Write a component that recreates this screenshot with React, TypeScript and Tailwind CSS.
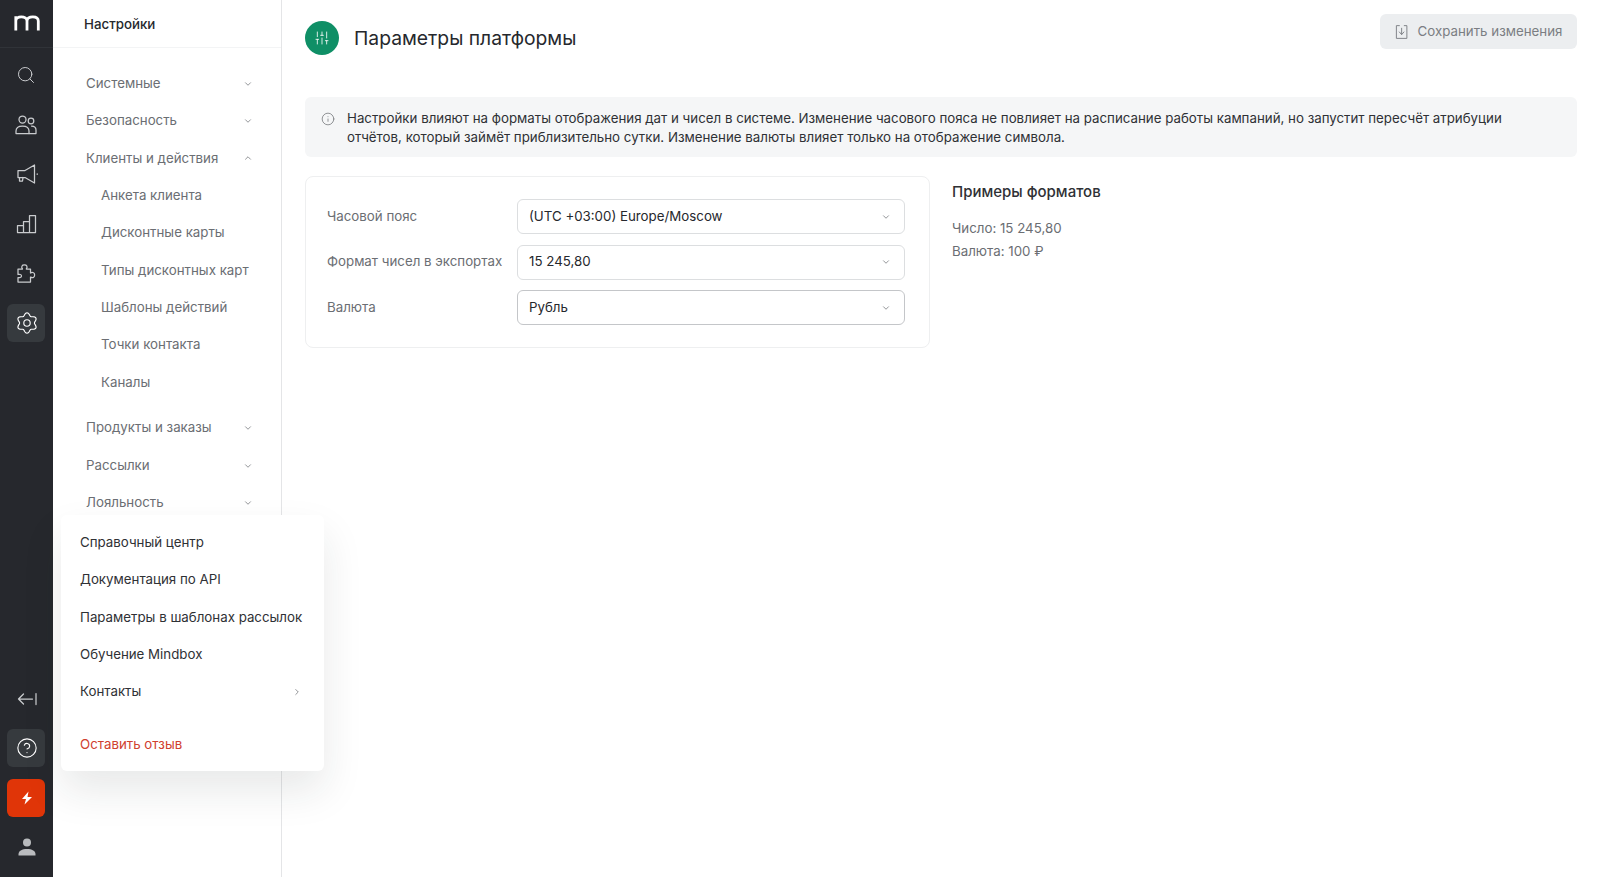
import React from "react";
import { ChevronDown, ChevronUp, ChevronRight, CircleHelp, Info, Search, SlidersVertical } from "lucide-react";

const Ico = ({ children, s = 24 }: { children: React.ReactNode; s?: number }) => (
  <svg width={s} height={s} viewBox="0 0 24 24" fill="none" stroke="currentColor" strokeWidth={1.25} strokeLinecap="round" strokeLinejoin="round">
    {children}
  </svg>
);

const gearPath = (() => {
  let d = "";
  for (let i = 0; i < 96; i++) {
    const t = (i / 96) * Math.PI * 2;
    const r = 9.6 + 1.5 * Math.cos(6 * t);
    const x = 12 + r * Math.sin(t);
    const y = 12 - r * Math.cos(t);
    d += `${i === 0 ? "M" : "L"}${x.toFixed(2)} ${y.toFixed(2)}`;
  }
  return d + "z";
})();

const Row = ({ label, open, sub }: { label: string; open?: boolean; sub?: boolean }) => (
  <div className={`h-[37.4px] flex items-center justify-between pr-[28px] text-[13.3px] text-[#6b6e73] ${sub ? "pl-[48px] whitespace-nowrap" : "pl-[33px]"}`}>
    <span>{label}</span>
    {!sub && (open ? <ChevronUp size={10} strokeWidth={1.75} /> : <ChevronDown size={10} strokeWidth={1.75} />)}
  </div>
);

const Field = ({ label, value, strong }: { label: string; value: string; strong?: boolean }) => (
  <div className="flex items-center">
    <div className="w-[190px] shrink-0 text-[13.3px] whitespace-nowrap text-[#6b6e73]">{label}</div>
    <div className={`flex-1 h-[35px] border rounded-[6px] flex items-center justify-between pl-[11px] pr-[13px] text-[13.3px] text-[#26282d] ${strong ? "border-[#c4c6c9]" : "border-[#dcdee0]"}`}>
      <span>{value}</span>
      <ChevronDown size={10} strokeWidth={1.75} className="text-[#6b6e73]" />
    </div>
  </div>
);

const MenuItem = ({ children, red }: { children: React.ReactNode; red?: boolean }) => (
  <div className={`h-[37.4px] flex items-center justify-between whitespace-nowrap text-[13.3px] ${red ? "text-[#d0402f]" : "text-[#2f3135]"}`}>{children}</div>
);

const SideBtn = ({ children, active, className = "" }: { children: React.ReactNode; active?: boolean; className?: string }) => (
  <div className={`w-[38px] h-[38px] rounded-[6px] flex items-center justify-center ${active ? "bg-[#363a3e]" : ""} ${className}`}>{children}</div>
);

export default function App() {
  return (
    <div className="relative flex h-[877px] w-[1599px] overflow-hidden bg-white font-['Inter',sans-serif]">
      <aside className="w-[53px] shrink-0 bg-[#26282d] flex flex-col items-center text-[#c9cbce]">
        <div className="h-[48px] w-full border-b border-[#303338] flex items-center justify-center text-white pb-[1px]">
          <svg width="26" height="16" viewBox="0 0 26 16" fill="none" stroke="currentColor" strokeWidth="2.8">
            <path d="M1.800 15.500V1.300M1.800 6C1.800 3.300 4.300 1.800 7.300 1.800s5.700 1.500 5.700 4.200v9.500M13 6c0-2.700 2.200-4.200 5.800-4.200s5.500 1.500 5.500 4.200v9.500" />
          </svg>
        </div>
        <div className="flex flex-col items-center gap-[11.5px] pt-[8px] pr-[1px]">
          <SideBtn><Search size={20} strokeWidth={1.2} /></SideBtn>
          <SideBtn>
            <Ico>
              <circle cx="8.500" cy="6.500" r="3.500" />
              <circle cx="17" cy="8" r="2.800" />
              <path d="M2 20.500v-2.500c0-3 2.500-5 6.500-5s6.500 2 6.500 5v2.500z" />
              <path d="M17.500 13c2.800 0 4.500 1.700 4.500 4v3.500h-7" />
            </Ico>
          </SideBtn>
          <SideBtn>
            <Ico>
              <path d="M4 8.500h7L20.500 3v18L11 15.500H4z" />
              <path d="M5.500 15.500v3.500h3l.5-3.500M23 12h.5" />
            </Ico>
          </SideBtn>
          <SideBtn>
            <Ico>
              <path d="M3.500 20.500v-7h6v7zM9.500 20.500V9.500h6v11zM15.500 20.500V3.500h6v17zM3.500 20.500h18" />
            </Ico>
          </SideBtn>
          <SideBtn>
            <Ico>
              <path d="M4 8h4.500c-.8-1-1-2-.5-3 .7-1.500 4-1.500 4.800 0 .5 1 .3 2-.5 3h4.200v4c1-.7 2-.8 3-.3 1.500.7 1.500 4 0 4.700-1 .5-2 .3-3-.3v4.900H4v-4.500c1.500.5 3.500 0 3.500-1.500s-2-2-3.500-1.500z" />
            </Ico>
          </SideBtn>
          <SideBtn active>
            <span className="text-white pl-[1px]">
              <Ico s={22}>
                <path d={gearPath} />
                <circle cx="12" cy="12" r="3.500" />
              </Ico>
            </span>
          </SideBtn>
        </div>
        <div className="mt-auto flex flex-col items-center gap-[11.5px] pb-[11px] pr-[1px]">
          <SideBtn>
            <span className="pl-[1px]">
              <Ico>
                <path d="M21 6.500v11M17.500 12H3.500M8.500 7l-5 5 5 5" />
              </Ico>
            </span>
          </SideBtn>
          <SideBtn active><CircleHelp size={22} strokeWidth={1.2} className="text-white ml-[1px]" /></SideBtn>
          <SideBtn className="bg-[#e03508]">
            <svg className="ml-[1px]" width="14" height="14" viewBox="0 0 14 14" fill="white"><path d="M8.500 0.500 2 8h4l-1.500 5.500L12 6H7.500z" /></svg>
          </SideBtn>
          <SideBtn>
            <svg className="ml-[1px]" width="20" height="20" viewBox="0 0 20 20" fill="#b9bbbe"><circle cx="10" cy="5.500" r="4" /><path d="M1.500 18.500v-1.500c0-3 3.500-5 8.500-5s8.500 2 8.500 5v1.500z" /></svg>
          </SideBtn>
        </div>
      </aside>

      <nav className="w-[229px] shrink-0 border-r border-[#e4e5e7] flex flex-col">
        <div className="h-[48px] border-b border-[#f3f4f5] flex items-center pl-[31px] pt-[2px] text-[13.3px] font-medium text-[#26282d]">Настройки</div>
        <div className="pt-[17px]">
          <Row label="Системные" />
          <Row label="Безопасность" />
          <Row label="Клиенты и действия" open />
          <Row sub label="Анкета клиента" />
          <Row sub label="Дисконтные карты" />
          <Row sub label="Типы дисконтных карт" />
          <Row sub label="Шаблоны действий" />
          <Row sub label="Точки контакта" />
          <Row sub label="Каналы" />
          <div className="h-[8px]" />
          <Row label="Продукты и заказы" />
          <Row label="Рассылки" />
          <Row label="Лояльность" />
        </div>
      </nav>

      <main className="flex-1 min-w-0 pl-[23px] pr-[22px]">
        <header className="h-[97px] flex justify-between">
          <div className="flex items-center gap-[15px] h-[76px]">
            <div className="w-[34px] h-[34px] rounded-full bg-[#0f8f66] flex items-center justify-center text-white">
              <SlidersVertical size={16} strokeWidth={1.25} />
            </div>
            <h1 className="text-[19.3px] font-normal text-[#26282d]">Параметры платформы</h1>
          </div>
          <button className="mt-[14px] h-[35px] w-[197px] rounded-[6px] bg-[#eceef0] flex items-center justify-center gap-[7px] pr-[2px] text-[13.3px] text-[#7b7e83]">
            <Ico s={18}>
              <path d="M8.500 3.500H4.500v17h14v-17h-3.500M11.500 7v8M8.500 12l3 3.500 3-3.500" />
            </Ico>
            Сохранить изменения
          </button>
        </header>

        <div className="h-[60px] rounded-[6px] bg-[#f5f6f7] flex items-center pl-[16px] pr-[60px] pt-[2px] gap-[12px] text-[13.3px] leading-[19.500px] text-[#2f3135]">
          <Info size={14} strokeWidth={1.25} className="shrink-0 self-start mt-[13px] text-[#6b6e73]" />
          <p>Настройки влияют на форматы отображения дат и чисел в системе. Изменение часового пояса не повлияет на расписание работы кампаний, но запустит пересчёт атрибуции отчётов, который займёт приблизительно сутки. Изменение валюты влияет только на отображение символа.</p>
        </div>

        <div className="flex mt-[19px]">
          <section className="w-[625px] h-[172px] border border-[#eeeff0] rounded-[8px] pl-[21px] pr-[24px] pt-[22px] flex flex-col gap-[10.5px]">
            <Field label="Часовой пояс" value="(UTC +03:00) Europe/Moscow" />
            <Field label="Формат чисел в экспортах" value="15 245,80" />
            <Field label="Валюта" value="Рубль" strong />
          </section>
          <section className="ml-[22px] pt-[6px]">
            <h2 className="text-[15px] font-medium leading-[20px] text-[#2f3135]">Примеры форматов</h2>
            <p className="mt-[15px] text-[13.3px] leading-[23px] text-[#6b6e73]">Число: 15 245,80</p>
            <p className="text-[13.3px] leading-[23px] text-[#6b6e73]">Валюта: 100 ₽</p>
          </section>
        </div>
      </main>

      <div className="absolute left-[61px] top-[515px] w-[263px] h-[256px] bg-white rounded-[6px] shadow-[0_20px_40px_rgba(30,35,40,0.10)] px-[19px] pt-[9px]">
        <MenuItem>Справочный центр</MenuItem>
        <MenuItem>Документация по API</MenuItem>
        <MenuItem>Параметры в шаблонах рассылок</MenuItem>
        <MenuItem>Обучение Mindbox</MenuItem>
        <MenuItem>Контакты<ChevronRight size={10} strokeWidth={1.75} className="text-[#6b6e73] mr-[3px]" /></MenuItem>
        <div className="h-[15px]" />
        <MenuItem red>Оставить отзыв</MenuItem>
      </div>
    </div>
  );
}
